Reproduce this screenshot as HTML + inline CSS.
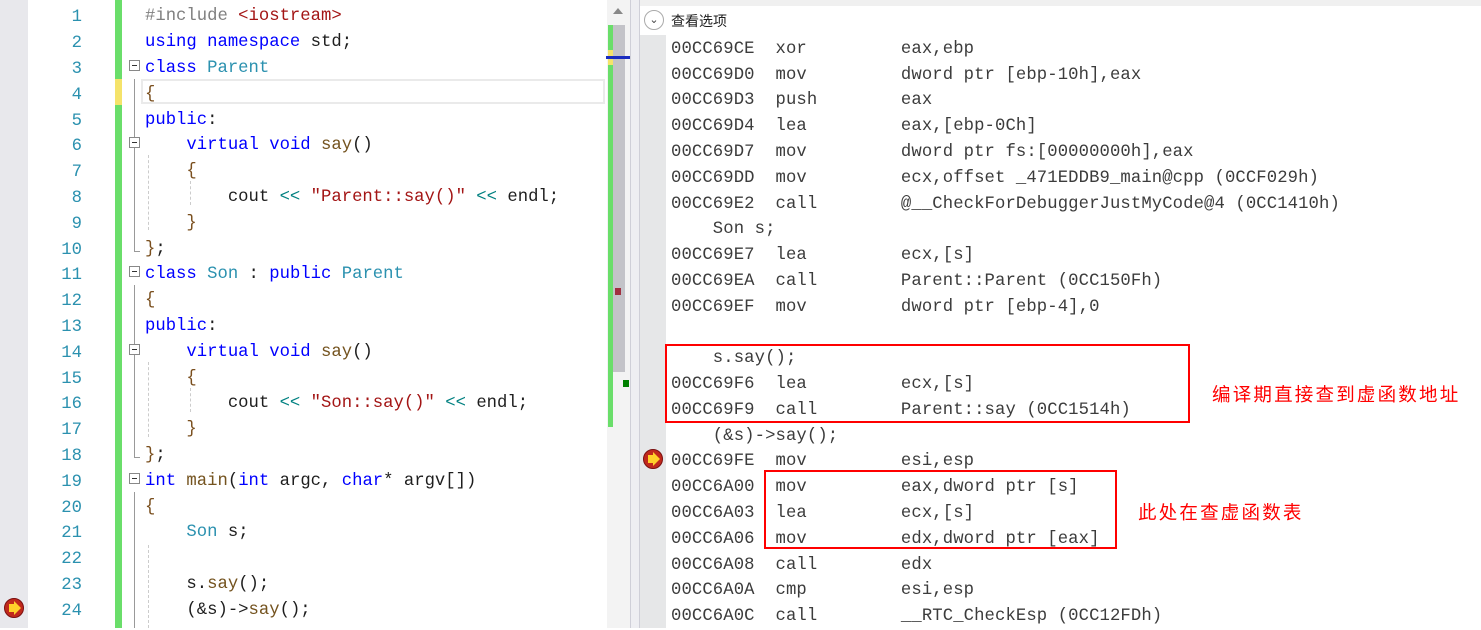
<!DOCTYPE html>
<html><head><meta charset="utf-8"><style>
*{margin:0;padding:0;box-sizing:border-box}
body{width:1481px;height:628px;overflow:hidden;background:#fff;position:relative;font-family:"Liberation Mono","Noto Sans CJK SC",monospace;font-size:17.25px;color:#1e1e1e}
.a{position:absolute}
.ln{position:absolute;left:28px;width:54px;text-align:right;color:#2b91af;line-height:26px;margin-top:2px}
.cl{position:absolute;left:145px;white-space:pre;line-height:26px;margin-top:2px}
.k{color:#0000ff}.t{color:#2b91af}.s{color:#a31515}.p{color:#808080}.f{color:#74531f}.o{color:#008080}.b{color:#7a4f1e}
.dr{position:absolute;left:671px;white-space:pre;line-height:26px;color:#3c3c3c;margin-top:2px;letter-spacing:0.1px}
.fold{position:absolute;left:129px;width:11px;height:11px;border:1px solid #888;background:#fff}
.fold:after{content:"";position:absolute;left:2px;top:4px;width:5px;height:1px;background:#333}
.arrow{position:absolute;width:20px;height:20px;border-radius:50%;background:#c0281c;border:1px solid #7a1010}
.arrow:after{content:"";position:absolute;left:4px;top:5px;width:6px;height:8px;background:#ffd02a}
.arrow:before{content:"";position:absolute;left:9px;top:2px;border-left:7px solid #ffd02a;border-top:7px solid transparent;border-bottom:7px solid transparent}
</style></head><body>
<div class="a" style="left:0;top:0;width:28px;height:628px;background:#e8e8ec"></div>
<div class="a" style="left:115px;top:0;width:7px;height:628px;background:#6ade6a"></div>
<div class="a" style="left:115px;top:79px;width:7px;height:26px;background:#f5e36a"></div>
<div class="a" style="left:141px;top:79px;width:464px;height:25px;border:2px solid #eaeaea"></div>
<div class="a" style="left:134px;top:79px;width:1px;height:172px;background:#999"></div>
<div class="a" style="left:134px;top:251px;width:6px;height:1px;background:#999"></div>
<div class="a" style="left:134px;top:285px;width:1px;height:172px;background:#999"></div>
<div class="a" style="left:134px;top:457px;width:6px;height:1px;background:#999"></div>
<div class="a" style="left:134px;top:492px;width:1px;height:136px;background:#999"></div>
<div class="a" style="left:148px;top:155px;width:0;height:75px;border-left:1px dashed #ccc"></div>
<div class="a" style="left:148px;top:362px;width:0;height:75px;border-left:1px dashed #ccc"></div>
<div class="a" style="left:148px;top:545px;width:0;height:83px;border-left:1px dashed #ccc"></div>
<div class="a" style="left:190px;top:181px;width:0;height:24px;border-left:1px dashed #ccc"></div>
<div class="a" style="left:190px;top:388px;width:0;height:24px;border-left:1px dashed #ccc"></div>
<div class="fold" style="top:60px"></div>
<div class="fold" style="top:137px"></div>
<div class="fold" style="top:266px"></div>
<div class="fold" style="top:344px"></div>
<div class="fold" style="top:473px"></div>
<div class="arrow" style="left:4px;top:598px"></div>

<div class="ln" style="top:3px">1</div><div class="cl" style="top:2px"><span class="p">#include </span><span class="s">&lt;iostream&gt;</span></div>
<div class="ln" style="top:29px">2</div><div class="cl" style="top:28px"><span class="k">using namespace</span> std;</div>
<div class="ln" style="top:55px">3</div><div class="cl" style="top:54px"><span class="k">class</span> <span class="t">Parent</span></div>
<div class="ln" style="top:81px">4</div><div class="cl" style="top:80px"><span class="b">{</span></div>
<div class="ln" style="top:107px">5</div><div class="cl" style="top:106px"><span class="k">public</span>:</div>
<div class="ln" style="top:132px">6</div><div class="cl" style="top:131px">    <span class="k">virtual void</span> <span class="f">say</span>()</div>
<div class="ln" style="top:158px">7</div><div class="cl" style="top:157px">    <span class="b">{</span></div>
<div class="ln" style="top:184px">8</div><div class="cl" style="top:183px">        cout <span class="o">&lt;&lt;</span> <span class="s">"Parent::say()"</span> <span class="o">&lt;&lt;</span> endl;</div>
<div class="ln" style="top:210px">9</div><div class="cl" style="top:209px">    <span class="b">}</span></div>
<div class="ln" style="top:236px">10</div><div class="cl" style="top:235px"><span class="b">}</span>;</div>
<div class="ln" style="top:261px">11</div><div class="cl" style="top:260px"><span class="k">class</span> <span class="t">Son</span> : <span class="k">public</span> <span class="t">Parent</span></div>
<div class="ln" style="top:287px">12</div><div class="cl" style="top:286px"><span class="b">{</span></div>
<div class="ln" style="top:313px">13</div><div class="cl" style="top:312px"><span class="k">public</span>:</div>
<div class="ln" style="top:339px">14</div><div class="cl" style="top:338px">    <span class="k">virtual void</span> <span class="f">say</span>()</div>
<div class="ln" style="top:365px">15</div><div class="cl" style="top:364px">    <span class="b">{</span></div>
<div class="ln" style="top:390px">16</div><div class="cl" style="top:389px">        cout <span class="o">&lt;&lt;</span> <span class="s">"Son::say()"</span> <span class="o">&lt;&lt;</span> endl;</div>
<div class="ln" style="top:416px">17</div><div class="cl" style="top:415px">    <span class="b">}</span></div>
<div class="ln" style="top:442px">18</div><div class="cl" style="top:441px"><span class="b">}</span>;</div>
<div class="ln" style="top:468px">19</div><div class="cl" style="top:467px"><span class="k">int</span> <span class="f">main</span>(<span class="k">int</span> argc, <span class="k">char</span>* argv[])</div>
<div class="ln" style="top:494px">20</div><div class="cl" style="top:493px"><span class="b">{</span></div>
<div class="ln" style="top:519px">21</div><div class="cl" style="top:518px">    <span class="t">Son</span> s;</div>
<div class="ln" style="top:545px">22</div>
<div class="ln" style="top:571px">23</div><div class="cl" style="top:570px">    s.<span class="f">say</span>();</div>
<div class="ln" style="top:597px">24</div><div class="cl" style="top:596px">    (&amp;s)-&gt;<span class="f">say</span>();</div>

<div class="a" style="left:607px;top:0;width:23px;height:628px;background:#f3f3f3"></div>
<div class="a" style="left:613px;top:8px;border-left:5px solid transparent;border-right:5px solid transparent;border-bottom:6px solid #888"></div>
<div class="a" style="left:608px;top:25px;width:5px;height:402px;background:#6ade6a"></div>
<div class="a" style="left:613px;top:25px;width:12px;height:347px;background:#c3c3c8"></div>
<div class="a" style="left:608px;top:50px;width:5px;height:15px;background:#f5e36a"></div>
<div class="a" style="left:606px;top:56px;width:24px;height:3px;background:#1a2cc0"></div>
<div class="a" style="left:615px;top:288px;width:6px;height:7px;background:#a03040"></div>
<div class="a" style="left:623px;top:380px;width:6px;height:7px;background:#008000"></div>
<div class="a" style="left:630px;top:0;width:10px;height:628px;background:#eeeef2;border-left:1px solid #cfcfd8;border-right:1px solid #cfcfd8"></div>

<div class="a" style="left:640px;top:0;width:841px;height:6px;background:#f0f0f0"></div>
<div class="a" style="left:640px;top:6px;width:841px;height:29px;background:#fff"></div>
<div class="a" style="left:644px;top:10px;width:20px;height:20px;border-radius:50%;border:1px solid #aaa;background:#fff;font:11px 'Liberation Sans';text-align:center;line-height:18px;color:#444">&#8964;</div>
<div class="a" style="left:671px;top:11px;font:14px 'Noto Sans CJK SC',sans-serif;color:#1e1e1e">查看选项</div>
<div class="a" style="left:640px;top:35px;width:26px;height:593px;background:#e6e7e8"></div>
<div class="arrow" style="left:643px;top:449px"></div>

<div class="dr" style="top:35px">00CC69CE  xor         eax,ebp</div>
<div class="dr" style="top:61px">00CC69D0  mov         dword ptr [ebp-10h],eax</div>
<div class="dr" style="top:86px">00CC69D3  push        eax</div>
<div class="dr" style="top:112px">00CC69D4  lea         eax,[ebp-0Ch]</div>
<div class="dr" style="top:138px">00CC69D7  mov         dword ptr fs:[00000000h],eax</div>
<div class="dr" style="top:164px">00CC69DD  mov         ecx,offset _471EDDB9_main@cpp (0CCF029h)</div>
<div class="dr" style="top:190px">00CC69E2  call        @__CheckForDebuggerJustMyCode@4 (0CC1410h)</div>
<div class="dr" style="top:215px">    Son s;</div>
<div class="dr" style="top:241px">00CC69E7  lea         ecx,[s]</div>
<div class="dr" style="top:267px">00CC69EA  call        Parent::Parent (0CC150Fh)</div>
<div class="dr" style="top:293px">00CC69EF  mov         dword ptr [ebp-4],0</div>
<div class="dr" style="top:344px">    s.say();</div>
<div class="dr" style="top:370px">00CC69F6  lea         ecx,[s]</div>
<div class="dr" style="top:396px">00CC69F9  call        Parent::say (0CC1514h)</div>
<div class="dr" style="top:422px">    (&amp;s)-&gt;say();</div>
<div class="dr" style="top:447px">00CC69FE  mov         esi,esp</div>
<div class="dr" style="top:473px">00CC6A00  mov         eax,dword ptr [s]</div>
<div class="dr" style="top:499px">00CC6A03  lea         ecx,[s]</div>
<div class="dr" style="top:525px">00CC6A06  mov         edx,dword ptr [eax]</div>
<div class="dr" style="top:551px">00CC6A08  call        edx</div>
<div class="dr" style="top:576px">00CC6A0A  cmp         esi,esp</div>
<div class="dr" style="top:602px">00CC6A0C  call        __RTC_CheckEsp (0CC12FDh)</div>

<div class="a" style="left:665px;top:344px;width:525px;height:79px;border:2px solid #f00"></div>
<div class="a" style="left:764px;top:470px;width:353px;height:79px;border:2px solid #f00"></div>
<div class="a" style="left:1212px;top:381px;font:18.5px 'Noto Sans CJK SC',sans-serif;color:#f00;letter-spacing:2.2px">编译期直接查到虚函数地址</div>
<div class="a" style="left:1138px;top:499px;font:18.5px 'Noto Sans CJK SC',sans-serif;color:#f00;letter-spacing:2.2px">此处在查虚函数表</div>
</body></html>
